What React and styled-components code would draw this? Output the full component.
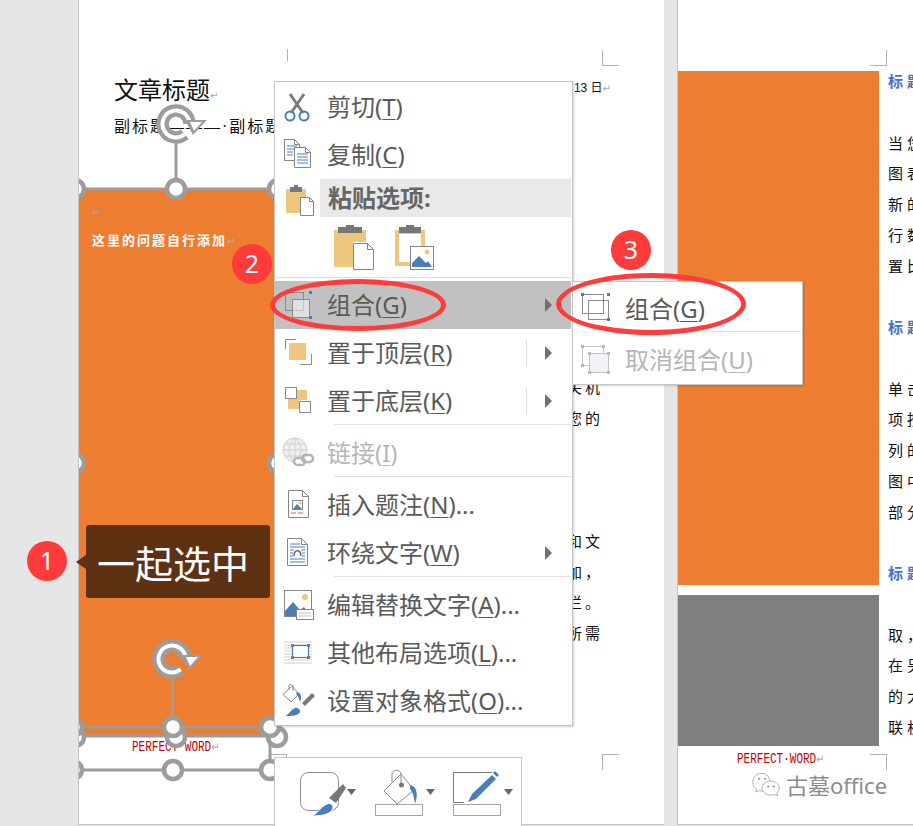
import React from "react";
import styled, { createGlobalStyle } from "styled-components";

const Global = createGlobalStyle`
  html, body { margin: 0; padding: 0; background: #e6e6e6; }
  * { box-sizing: border-box; }
`;

const UI_FONT = `"Noto Sans", "Noto Sans CJK SC", sans-serif`;
const DOC_FONT = `"Liberation Serif", "Noto Sans CJK SC", serif`;
const BLUE = "#4a7eb8";
const GOLD = "#edc67f";
const GREY = "#858585";

const Stage = styled.div`
  position: relative;
  width: 913px;
  height: 826px;
  overflow: hidden;
  background: #e6e6e6;
  display: flex;
  gap: 13px;
  padding-left: 78px;
  align-items: flex-start;
`;
const Page = styled.div`
  position: relative;
  flex: none;
  height: 825px;
  width: ${(p) => p.$width}px;
  background: #fff;
  border-left: 1px solid #c4c4c4;
  border-bottom: 1px solid #c4c4c4;
  overflow: hidden;
  font-family: ${DOC_FONT};
  color: #111;
`;
const Header = styled.header`
  height: 189px;
  padding: 74px 53px 0 35px;
`;
const TitleLine = styled.div`
  display: flex;
  justify-content: space-between;
  align-items: flex-start;
  height: 30px;
`;
const DocTitle = styled.h1`
  margin: 0;
  font-size: 24px;
  font-weight: 400;
  line-height: 30px;
  font-family: "Noto Sans CJK SC", sans-serif;
`;
const DateText = styled.span`
  font-size: 12px;
  line-height: 28px;
  font-family: "Liberation Sans", "Noto Sans CJK SC", sans-serif;
`;
const Mark = styled.span`
  color: #a9a9a9;
  font-size: 10px;
  font-family: "DejaVu Sans", sans-serif;
`;
const Subtitle = styled.div`
  margin-top: 11px;
  font-size: 16px;
  line-height: 24px;
  letter-spacing: 2px;
  white-space: nowrap;
`;
const Body = styled.div`
  display: flex;
  height: 546px;
`;
const Orange = styled.div`
  flex: none;
  width: 196px;
  background: #ed7d31;
  padding: 13px 13px 0;
`;
const OrangeHead = styled.div`
  margin-top: 10px;
  color: #fff;
  font-size: 13px;
  font-weight: 700;
  letter-spacing: 2px;
  line-height: 20px;
  font-family: "Noto Sans CJK SC", sans-serif;
  white-space: nowrap;
`;
const SideColumn = styled.div`
  flex: 1;
  padding: 183px 61px 0 0;
  text-align: right;
  font-size: 15px;
  letter-spacing: 3px;
  line-height: 30.8px;
  font-family: "Noto Sans CJK SC", sans-serif;
`;
const TextLine = styled.div`
  height: 30.75px;
  white-space: nowrap;
`;
const Foot = styled.div`
  font-family: "Liberation Mono", monospace;
  font-size: 11px;
  line-height: 14px;
  color: #c00000;
  white-space: nowrap;
  padding: ${(p) => p.$pad};
  transform: scaleY(1.25);
  transform-origin: left center;
`;
const RightGrid = styled.div`
  display: flex;
`;
const Shapes = styled.div`
  flex: none;
  width: 201px;
  padding-top: 71px;
  display: flex;
  flex-direction: column;
`;
const ShapeBlock = styled.div`
  height: ${(p) => p.$h}px;
  margin-bottom: ${(p) => p.$mb}px;
  background: ${(p) => p.$bg};
`;
const Column = styled.div`
  flex: none;
  width: 60px;
  padding: 66px 0 0 9px;
  font-size: 15px;
  letter-spacing: 4px;
  line-height: 30.75px;
  font-family: "Noto Sans CJK SC", sans-serif;
`;
const BlueHead = styled(TextLine)`
  color: #4472c4;
  font-weight: 700;
`;
const Crop = styled.i`
  position: absolute;
  left: ${(p) => p.$x}px;
  top: ${(p) => p.$y}px;
  width: 17px;
  height: ${(p) => p.$h || 16}px;
  border-color: #b3b3b3;
  border-style: solid;
  border-width: ${(p) => p.$edges};
`;
const Overlay = styled.svg`
  position: absolute;
  left: 0;
  top: 0;
  pointer-events: none;
`;
const Menu = styled.div`
  position: absolute;
  left: ${(p) => p.$x}px;
  top: ${(p) => p.$y}px;
  width: ${(p) => p.$w}px;
  background: #fff;
  border: 1px solid #c6c6c6;
  box-shadow: 1px 1px 2px rgba(0, 0, 0, 0.18);
  font-family: ${UI_FONT};
  padding: ${(p) => p.$pad};
`;
const Row = styled.div`
  display: flex;
  align-items: center;
  height: 48px;
  padding-left: 5px;
  margin: 0 1px 0 0;
  background: ${(p) => (p.$active ? "#c1c1c1" : "transparent")};
  color: ${(p) => (p.$off ? "#b6b6b6" : "#5a5a5a")};
  font-size: 24px;
  white-space: nowrap;
  u { text-underline-offset: 3px; text-decoration-thickness: 1px; }
`;
const LabelText = styled.span`
  display: block;
  padding-bottom: 3px;
`;
const IconCell = styled.svg`
  flex: none;
  width: 36px;
  height: 36px;
  margin-right: 11px;
`;
const Tail = styled.div`
  margin-left: auto;
  display: flex;
  align-items: center;
  height: 26px;
  padding-right: 19px;
`;
const TailRule = styled.i`
  width: 1px;
  height: 26px;
  background: #dcdcdc;
  margin-right: 18px;
`;
const Caret = styled.i`
  width: 0;
  height: 0;
  border-left: 7.5px solid #707070;
  border-top: 7px solid transparent;
  border-bottom: 7px solid transparent;
`;
const PasteHead = styled.div`
  display: flex;
  align-items: center;
  height: 38px;
  padding-left: 5px;
`;
const PasteIcon = styled.svg`
  flex: none;
  width: 36px;
  height: 36px;
  margin-right: 4px;
`;
const PasteTitle = styled.div`
  flex: 1;
  height: 38px;
  line-height: 38px;
  margin-right: 1px;
  padding-left: 8px;
  background: #e9e9e9;
  color: #666;
  font-size: 24px;
  font-weight: 700;
`;
const PasteRow = styled.div`
  display: flex;
  gap: 18px;
  height: 60px;
  padding: 8px 0 0 58px;
`;
const Rule = styled.div`
  height: 1px;
  background: #e0e0e0;
  margin: ${(p) => p.$m};
`;
const Toolbar = styled.div`
  position: absolute;
  left: 274px;
  top: 757px;
  width: 248px;
  height: 75px;
  background: #fff;
  border: 1px solid #c6c6c6;
  display: flex;
  padding: 8px 0 0 23px;
`;
const ToolIcon = styled.svg`
  flex: none;
  width: 77px;
  height: 54px;
`;
const Callout = styled.div`
  position: absolute;
  left: 86px;
  top: 525px;
  width: 184px;
  height: 73px;
  padding-right: 10px;
  border-radius: 3px;
  background: #5e3113;
  color: #fff;
  font: 400 38px/73px "Noto Sans CJK SC", sans-serif;
  text-align: center;
  &::before {
    content: "";
    position: absolute;
    left: -10px;
    top: 30px;
    border-right: 10px solid #5e3113;
    border-top: 7px solid transparent;
    border-bottom: 7px solid transparent;
  }
`;
const Badge = styled.div`
  position: absolute;
  left: ${(p) => p.$x - 20}px;
  top: ${(p) => p.$y - 20}px;
  width: 40px;
  height: 40px;
  border-radius: 50%;
  background: #ff3b3b;
  color: #fff;
  font: 400 25px/38px "Noto Sans", sans-serif;
  text-align: center;
`;
const Ring = styled.div`
  position: absolute;
  left: ${(p) => p.$x}px;
  top: ${(p) => p.$y}px;
  width: ${(p) => p.$w}px;
  height: ${(p) => p.$h}px;
  border: 5.5px solid #ff3b3b;
  border-radius: 50%;
`;
const Watermark = styled.div`
  position: absolute;
  left: 752px;
  top: 768px;
  display: flex;
  align-items: center;
  gap: 6px;
  color: #8d8d8d;
  font: 400 22px/34px "Noto Sans", "Noto Sans CJK SC", sans-serif;
  text-shadow: 0 0 2px #fff, 0 0 2px #fff;
`;

const Handle = ({ x, y }) => <circle cx={x} cy={y} r="9" fill="#fff" stroke="#9c9c9c" strokeWidth="4.5" />;
const Rotate = ({ x, y }) => {
  const d = `M${x + 8.7} ${y + 10.3}A13.5 13.5 0 1 1 ${x + 13.5} ${y}`;
  return (
    <g>
      <path d={d} fill="none" stroke="#9c9c9c" strokeWidth="12.5" />
      <path d={d} fill="none" stroke="#fff" strokeWidth="4" />
      <path d={`M${x + 9} ${y - 4}H${x + 31}L${x + 17} ${y + 11}Z`} fill="#9c9c9c" />
      <path d={`M${x + 14} ${y - 2}H${x + 26}L${x + 18} ${y + 7}Z`} fill="#fff" />
    </g>
  );
};

const Selection = () => (
  <Overlay width="586" height="825" viewBox="79 0 586 825">
    <g stroke="#9c9c9c" fill="none">
      <path d="M176 143V189M70 189H280M70 736H280" strokeWidth="3" />
      <path d="M172.500 675V727M70 727H270V770H70" strokeWidth="3" />
    </g>
    <Rotate x={176} y={124} />
    <Handle x={75} y={189} /><Handle x={176} y={189} /><Handle x={278} y={189} />
    <Handle x={75} y={463} /><Handle x={278} y={463} />
    <Handle x={75} y={737} /><Handle x={176} y={737} /><Handle x={277} y={737} />
    <Rotate x={172} y={659} />
    <Handle x={73} y={727} /><Handle x={173} y={727} /><Handle x={270} y={727} />
    <Handle x={73} y={770} /><Handle x={173} y={770} /><Handle x={270} y={770} />
  </Overlay>
);

const Doc = ({ x, y, w, h, fold = 5, fill = "#fff", stroke = GREY }) => (
  <path
    d={`M${x} ${y}H${x + w - fold}L${x + w} ${y + fold}V${y + h}H${x}Z M${x + w - fold} ${y}V${y + fold}H${x + w}`}
    fill={fill}
    stroke={stroke}
  />
);

const icons = {
  cut: (
    <g fill="none">
      <path d="M10 5L23 24M24 5L11 24" stroke="#7c7c7c" strokeWidth="3" />
      <circle cx="10" cy="27" r="4.500" stroke={BLUE} strokeWidth="2" />
      <circle cx="24" cy="27" r="4.500" stroke={BLUE} strokeWidth="2" />
    </g>
  ),
  copy: (
    <g>
      <Doc x={4.5} y={2.5} w={15} h={21} />
      <path d="M7 9H17M7 12H17M7 15H13M7 18H13" stroke={BLUE} />
      <Doc x={14.5} y={10.500} w={16} h={20} />
      <path d="M17 17H28M17 20H28M17 23H28M17 26H28" stroke={BLUE} />
    </g>
  ),
  group: (
    <g fill="none" stroke="#8a8a8a">
      <rect x="5.500" y="5.500" width="18" height="18" />
      <rect x="12.500" y="12.500" width="17" height="18" fill="#ffffff80" />
      <rect x="29" y="4" width="3" height="3" fill={BLUE} stroke="none" />
      <rect x="29" y="29" width="3" height="3" fill={BLUE} stroke="none" />
    </g>
  ),
  top: (
    <g>
      <path d="M5.500 14V4.500H16M31.500 19V29.500H20" fill="none" stroke="#8a8a8a" />
      <rect x="9" y="8" width="17" height="17" fill={GOLD} />
    </g>
  ),
  bottom: (
    <g>
      <rect x="17" y="7" width="10" height="10" fill={GOLD} />
      <rect x="8" y="16" width="11" height="10" fill={GOLD} />
      <rect x="5.500" y="4.500" width="11" height="11" fill="#fff" stroke="#8a8a8a" />
      <rect x="19.500" y="18.500" width="11" height="11" fill="#fff" stroke="#8a8a8a" />
    </g>
  ),
  link: (
    <g fill="none">
      <circle cx="15" cy="15" r="12" fill="#eee" stroke="#cfcfcf" />
      <path d="M3 15H27M15 3V27M5 9H25M5 21H25M15 3C7 9 7 21 15 27M15 3C23 9 23 21 15 27" stroke="#d2d2d2" />
      <rect x="14" y="23" width="11" height="7" rx="3.500" stroke="#b4b4b4" strokeWidth="2.500" fill="#fff" />
      <rect x="22" y="20" width="11" height="7" rx="3.500" stroke="#b4b4b4" strokeWidth="2.500" />
    </g>
  ),
  caption: (
    <g>
      <Doc x={8.5} y={3.5} w={20} h={27} fold={6} />
      <rect x="12.500" y="13.500" width="10" height="9" fill="#fff" stroke={GREY} />
      <path d="M13 22L17 17L22 22Z" fill={BLUE} />
      <circle cx="20" cy="16" r="1.500" fill={GOLD} />
      <path d="M11 26H16M18 26H23" stroke="#d9603a" />
    </g>
  ),
  wrap: (
    <g>
      <Doc x={7.5} y={3.5} w={20} h={27} fold={6} />
      <path d="M10 9H20M10 12H25M10 15H14M21 15H25M10 18H13M22 18H25M10 21H13M22 21H25M10 24H25M10 27H25" stroke={BLUE} />
      <path d="M14 21C14 14 21 14 21 21" fill="none" stroke="#666" strokeWidth="1.500" />
    </g>
  ),
  alt: (
    <g>
      <rect x="4.500" y="3.500" width="27" height="26" fill="#fff" stroke={GREY} />
      <circle cx="25" cy="10" r="3" fill={GOLD} />
      <path d="M5 29V24L13 15L20 23L24 20L31 29Z" fill={BLUE} />
      <rect x="16.500" y="22.500" width="17" height="10" fill="#fff" stroke={GREY} />
      <path d="M19 26H31M19 29H31" stroke="#bbb" />
    </g>
  ),
  layout: (
    <g>
      <path d="M4 7H32M4 10H32M4 13H32M4 16H32M4 19H32M4 22H32M4 25H32M4 28H32" stroke="#cfcfcf" />
      <rect x="12.500" y="10.500" width="16" height="12" fill="#fff" stroke={BLUE} strokeWidth="1.200" />
      <path d="M11 9h3v3h-3zM27 9h3v3h-3zM11 21h3v3h-3zM27 21h3v3h-3z" fill="#7a7a7a" />
    </g>
  ),
  format: (
    <g>
      <path d="M3 11.500L12 3L19 11L11 19Z" fill="#fff" stroke="#8a8a8a" />
      <path d="M9 7V3C9 1 13 1 13 3V8" fill="none" stroke="#8a8a8a" />
      <path d="M17 9C21 10 22 14 20 19C19 15 18 12 16 11Z" fill={BLUE} />
      <path d="M22 20L32 10L35 13L25 23Z" fill="#7b7b7b" />
      <path d="M5 33C9 32 10 27 15 25C17 24 21 27 20 29C18 33 12 33 5 33Z" fill={BLUE} />
    </g>
  ),
  subGroup: (
    <g fill="none" stroke="#8a8a8a">
      <rect x="4.500" y="3.500" width="21" height="19" />
      <rect x="10.500" y="9.500" width="20" height="19" />
      <rect x="3" y="2" width="3" height="3" fill={BLUE} stroke="none" />
      <rect x="29" y="2" width="3" height="3" fill={BLUE} stroke="none" />
      <rect x="29" y="27" width="3" height="3" fill={BLUE} stroke="none" />
    </g>
  ),
  ungroup: (
    <g>
      <rect x="4.500" y="4.500" width="21" height="19" fill="#fff" stroke="#c4c4c4" />
      <rect x="11.500" y="11.500" width="19" height="19" fill="#f3f1f6" stroke="#c4c4c4" />
      <path d="M3 3h3v3h-3zM24 3h3v3h-3zM3 22h3v3h-3zM10 10h3v3h-3zM29 10h3v3h-3zM10 29h3v3h-3zM29 29h3v3h-3z" fill="#b8b8b8" />
    </g>
  ),
};

const Clip = ({ picture }) =>
  picture ? (
    <svg width="42" height="46" viewBox="0 0 42 46">
      <path d="M2 5H32V25H28V9H6V37H20V41H2Z" fill={GOLD} />
      <path d="M6 2H28V8H6ZM13 0H21V3H13Z" fill="#777" />
      <rect x="17.500" y="21.500" width="23" height="23" fill="#fff" stroke={GREY} />
      <circle cx="34" cy="27" r="2.500" fill={GOLD} />
      <path d="M19 42V38L26 31L33 38L35 36L39 42Z" fill={BLUE} />
    </svg>
  ) : (
    <svg width="42" height="46" viewBox="0 0 42 46">
      <path d="M1 5H33V17H20V42H1Z" fill={GOLD} />
      <path d="M5 2H29V8H5ZM13 0H21V3H13Z" fill="#777" />
      <Doc x={20.5} y={18.5} w={20} h={26} fold={6} />
    </svg>
  );

const MenuRow = ({ icon, text, keyName, tail = "", active, off, arrow, rule }) => (
  <Row $active={active} $off={off}>
    <IconCell viewBox="0 0 36 36">{icons[icon]}</IconCell>
    <LabelText>
      {text}(<u>{keyName}</u>){tail}
    </LabelText>
    {arrow && (
      <Tail>
        {rule && <TailRule />}
        <Caret />
      </Tail>
    )}
  </Row>
);

const leftLines = ["关机", "您的", "", "", "", "和文", "加，", "栏。", "所需"];
const rightLines = [
  ["标题", 1], [""], ["当您"], ["图表"], ["新的"], ["行数"], ["置比"], [""],
  ["标题", 1], [""], ["单击"], ["项按"], ["列的"], ["图中"], ["部分"], [""],
  ["标题", 1], [""], ["取，"], ["在另"], ["的大"], ["联机"],
];

export default function App() {
  return (
    <Stage>
      <Global />
      <Page $width={586}>
        <Header>
          <TitleLine>
            <DocTitle>文章标题<Mark>↵</Mark></DocTitle>
            <DateText>13 日<Mark>↵</Mark></DateText>
          </TitleLine>
          <Subtitle>副标题———·副标题</Subtitle>
        </Header>
        <Body>
          <Orange>
            <Mark>↵</Mark>
            <OrangeHead>这里的问题自行添加<Mark>↵</Mark></OrangeHead>
          </Orange>
          <SideColumn>
            {leftLines.map((t, i) => <TextLine key={i}>{t}</TextLine>)}
          </SideColumn>
        </Body>
        <Foot $pad="5px 0 0 53px">PERFECT WORD<Mark>↵</Mark></Foot>
        <Crop $x={192} $y={49} $h={12} $edges="0 1px 0 0" />
        <Crop $x={523} $y={50} $edges="0 0 1px 1px" />
        <Crop $x={191} $y={754} $edges="1px 1px 0 0" />
        <Crop $x={523} $y={754} $edges="1px 0 0 1px" />
        <Selection />
      </Page>
      <Page $width={240}>
        <RightGrid>
          <Shapes>
            <ShapeBlock $h={514} $mb={10} $bg="#ed7d31" />
            <ShapeBlock $h={151} $mb={6} $bg="#7f7f7f" />
            <Foot $pad="0 0 0 59px">PERFECT·WORD<Mark>↵</Mark></Foot>
          </Shapes>
          <Column>
            {rightLines.map(([t, head], i) =>
              head ? <BlueHead key={i}>{t}</BlueHead> : <TextLine key={i}>{t}</TextLine>
            )}
          </Column>
        </RightGrid>
        <Crop $x={192} $y={50} $edges="0 1px 1px 0" />
        <Crop $x={192} $y={754} $edges="1px 1px 0 0" />
      </Page>

      <Menu $x={274} $y={81} $w={299} $pad="1px 0 0">
        <MenuRow icon="cut" text="剪切" keyName="T" />
        <MenuRow icon="copy" text="复制" keyName="C" />
        <PasteHead>
          <PasteIcon viewBox="0 0 36 36">
            <path d="M6 9H26V33H6Z" fill={GOLD} />
            <path d="M10 7H22V12H10ZM14 5H18V8H14Z" fill="#777" />
            <Doc x={20.5} y={17.5} w={13} h={18} fold={4} />
          </PasteIcon>
          <PasteTitle>粘贴选项:</PasteTitle>
        </PasteHead>
        <PasteRow>
          <Clip />
          <Clip picture />
        </PasteRow>
        <Rule $m="0 1px 3px 1px" />
        <MenuRow icon="group" text="组合" keyName="G" active arrow />
        <MenuRow icon="top" text="置于顶层" keyName="R" arrow rule />
        <MenuRow icon="bottom" text="置于底层" keyName="K" arrow rule />
        <Rule $m="-1px 1px 4px 59px" />
        <MenuRow icon="link" text="链接" keyName="I" off />
        <Rule $m="-1px 1px 4px 59px" />
        <MenuRow icon="caption" text="插入题注" keyName="N" tail="..." />
        <MenuRow icon="wrap" text="环绕文字" keyName="W" arrow />
        <Rule $m="-1px 1px 4px 59px" />
        <MenuRow icon="alt" text="编辑替换文字" keyName="A" tail="..." />
        <MenuRow icon="layout" text="其他布局选项" keyName="L" tail="..." />
        <MenuRow icon="format" text="设置对象格式" keyName="O" tail="..." />
      </Menu>

      <Menu $x={572} $y={281} $w={231} $pad="3px 0 0">
        <MenuRow icon="subGroup" text="组合" keyName="G" />
        <Rule $m="-2px 1px 4px 54px" />
        <MenuRow icon="ungroup" text="取消组合" keyName="U" off />
      </Menu>

      <Toolbar>
        <ToolIcon viewBox="298 765 77 54">
          <rect x="300.500" y="771.500" width="38" height="38" rx="8" fill="none" stroke="#8a8a8a" />
          <path d="M343 783L346 787L336 802L329 797Z" fill="#777" />
          <path d="M311 815C318 813 320 806 327 803C331 801 335 805 332 809C329 814 320 815 311 815Z" fill={BLUE} stroke="#fff" />
          <path d="M347 788H356L351.500 794Z" fill="#666" />
        </ToolIcon>
        <ToolIcon viewBox="374 765 77 54">
          <path d="M383 790L400 773L413 789L396 803Z" fill="#fff" stroke="#8a8a8a" />
          <path d="M391 781V773C391 768 400 768 400 773V784" fill="none" stroke="#8a8a8a" />
          <circle cx="400.500" cy="784" r="2.500" fill="#777" />
          <path d="M409 784C415 785 418 792 414 803C413 796 412 791 409 788Z" fill={BLUE} />
          <rect x="374.500" y="803.500" width="47" height="11" fill="#fff" stroke="#a5a5a5" />
          <path d="M425 788H434L429.500 794Z" fill="#666" />
        </ToolIcon>
        <ToolIcon viewBox="451 765 77 54">
          <path d="M491 771.500H452.500V801.500H463" fill="none" stroke="#777" />
          <path d="M467 801L471 793L491 774L495 778L475 798Z" fill={BLUE} />
          <path d="M492 772L494 770L498 774L496 776Z" fill={BLUE} />
          <rect x="452.500" y="803.500" width="47" height="11" fill="#fff" stroke="#a5a5a5" />
          <path d="M503 788H512L507.500 794Z" fill="#666" />
        </ToolIcon>
      </Toolbar>

      <Callout>一起选中</Callout>
      <Badge $x={47} $y={561}>1</Badge>
      <Badge $x={252} $y={264}>2</Badge>
      <Badge $x={631} $y={250}>3</Badge>
      <Ring $x={270} $y={279} $w={176} $h={52} />
      <Ring $x={556} $y={273} $w={190} $h={62} />
      <Watermark>
        <svg width="28" height="32" viewBox="0 0 36 32" fill="#fff" stroke="#9a9a9a" strokeWidth="1">
          <path d="M13 1C6 1 1 6 1 12C1 16 3 19 6 21L5 25L10 23C12 24 14 24 16 24C26 24 26 1 13 1Z" />
          <path d="M24 11C17 11 13 15 13 20C13 25 18 29 24 29C26 29 27 29 29 28L33 30L32 26C34 25 35 22 35 20C35 15 30 11 24 11Z" />
          <circle cx="9" cy="8" r="1" fill="#9a9a9a" /><circle cx="17" cy="8" r="1" fill="#9a9a9a" />
          <circle cx="21" cy="18" r="1" fill="#9a9a9a" /><circle cx="28" cy="18" r="1" fill="#9a9a9a" />
        </svg>
        古墓office
      </Watermark>
    </Stage>
  );
}
